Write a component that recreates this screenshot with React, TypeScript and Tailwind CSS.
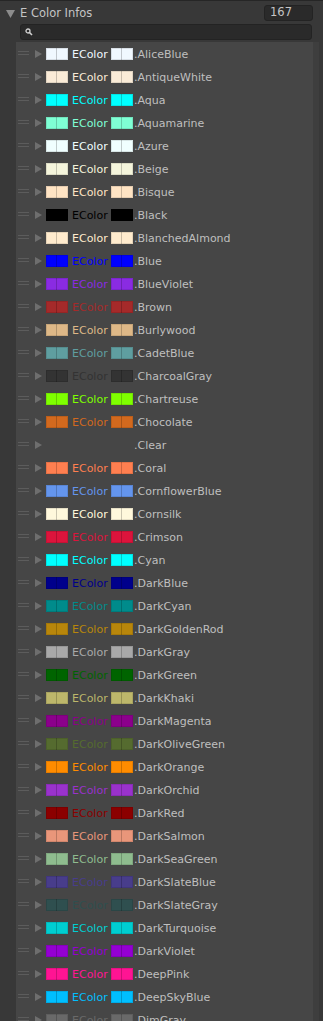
import React from "react";

const colors: [string, string | null][] = [
  ["AliceBlue", "#F0F8FF"],
  ["AntiqueWhite", "#FAEBD7"],
  ["Aqua", "#00FFFF"],
  ["Aquamarine", "#7FFFD4"],
  ["Azure", "#F0FFFF"],
  ["Beige", "#F5F5DC"],
  ["Bisque", "#FFE4C4"],
  ["Black", "#000000"],
  ["BlanchedAlmond", "#FFEBCD"],
  ["Blue", "#0000FF"],
  ["BlueViolet", "#8A2BE2"],
  ["Brown", "#A52A2A"],
  ["Burlywood", "#DEB887"],
  ["CadetBlue", "#5F9EA0"],
  ["CharcoalGray", "#333333"],
  ["Chartreuse", "#7FFF00"],
  ["Chocolate", "#D2691E"],
  ["Clear", null],
  ["Coral", "#FF7F50"],
  ["CornflowerBlue", "#6495ED"],
  ["Cornsilk", "#FFF8DC"],
  ["Crimson", "#DC143C"],
  ["Cyan", "#00FFFF"],
  ["DarkBlue", "#00008B"],
  ["DarkCyan", "#008B8B"],
  ["DarkGoldenRod", "#B8860B"],
  ["DarkGray", "#A9A9A9"],
  ["DarkGreen", "#006400"],
  ["DarkKhaki", "#BDB76B"],
  ["DarkMagenta", "#8B008B"],
  ["DarkOliveGreen", "#556B2F"],
  ["DarkOrange", "#FF8C00"],
  ["DarkOrchid", "#9932CC"],
  ["DarkRed", "#8B0000"],
  ["DarkSalmon", "#E9967A"],
  ["DarkSeaGreen", "#8FBC8F"],
  ["DarkSlateBlue", "#483D8B"],
  ["DarkSlateGray", "#2F4F4F"],
  ["DarkTurquoise", "#00CED1"],
  ["DarkViolet", "#9400D3"],
  ["DeepPink", "#FF1493"],
  ["DeepSkyBlue", "#00BFFF"],
  ["DimGray", "#696969"],
];

function Swatch({ color }: { color: string | null }) {
  if (!color) return <div className="w-[22px] h-[12px]" />;
  return (
    <div className="relative w-[22px] h-[12px]" style={{ backgroundColor: color }}>
      <div className="absolute left-[10px] top-0 bottom-0 w-px bg-black/20" />
      <div className="absolute inset-0 border border-black/10" />
    </div>
  );
}

function Row({ name, color }: { name: string; color: string | null }) {
  return (
    <div className="flex items-center h-[23px] shrink-0 pt-[1px]">
      <div className="ml-[2px] w-[11px] flex flex-col gap-[2px] -mt-[3px]">
        <div className="h-px bg-[#5c5c5c]" />
        <div className="h-px bg-[#5c5c5c]" />
      </div>
      <svg className="ml-[6px]" width="7" height="8" viewBox="0 0 7 8">
        <path d="M0 0 L7 4 L0 8 Z" fill="#6e6e6e" />
      </svg>
      <div className="ml-[4px]">
        <Swatch color={color} />
      </div>
      <span
        className="ml-[4px] w-[39px] text-[11px] leading-none whitespace-nowrap"
        style={{ color: color ?? "transparent" }}
      >
        EColor
      </span>
      <div>
        <Swatch color={color} />
      </div>
      <span className="ml-px text-[11px] leading-none text-[#bfbfbf] whitespace-nowrap">.{name}</span>
    </div>
  );
}

export default function App() {
  return (
    <div
      className="w-[323px] h-[1021px] bg-[#383838] overflow-hidden flex flex-col border-t border-[#262626]"
      style={{ fontFamily: "'DejaVu Sans', Verdana, sans-serif" }}
    >
      <div className="flex items-center h-[23px] pt-[3px] shrink-0">
        <svg className="ml-[6px]" width="9" height="8" viewBox="0 0 9 8">
          <path d="M0 0 L9 0 L4.5 8 Z" fill="#8c8c8c" />
        </svg>
        <span className="ml-[5px] text-[11.5px] leading-none text-[#c4c4c4]">E Color Infos</span>
        <div className="ml-auto mr-[10px] -mt-[2px] w-[49px] h-[16px] rounded-[3px] bg-[#2a2a2a] border border-[#232323] flex items-center px-[5px] text-[11.5px] text-[#c4c4c4]">
          167
        </div>
      </div>
      <div className="ml-[20px] mr-[11px] h-[16px] rounded-[3px] bg-[#2a2a2a] border border-[#232323] flex items-center px-[4px] shrink-0">
        <svg width="8" height="8" viewBox="0 0 8 8">
          <circle cx="3" cy="3" r="2" fill="none" stroke="#d0d0d0" strokeWidth="1.3" />
          <path d="M4.5 4.5 L7 7" stroke="#d0d0d0" strokeWidth="1.6" />
        </svg>
      </div>
      <div className="flex flex-1 mt-[2px] min-h-0">
        <div className="w-[16px] shrink-0" />
        <div className="w-[297px] bg-[#464646] flex flex-col overflow-hidden">
          {colors.map(([n, c]) => (
            <Row key={n} name={n} color={c} />
          ))}
        </div>
        <div className="w-[6px] bg-[#3e3e3e]" />
        <div className="flex-1 bg-[#383838]" />
      </div>
    </div>
  );
}
